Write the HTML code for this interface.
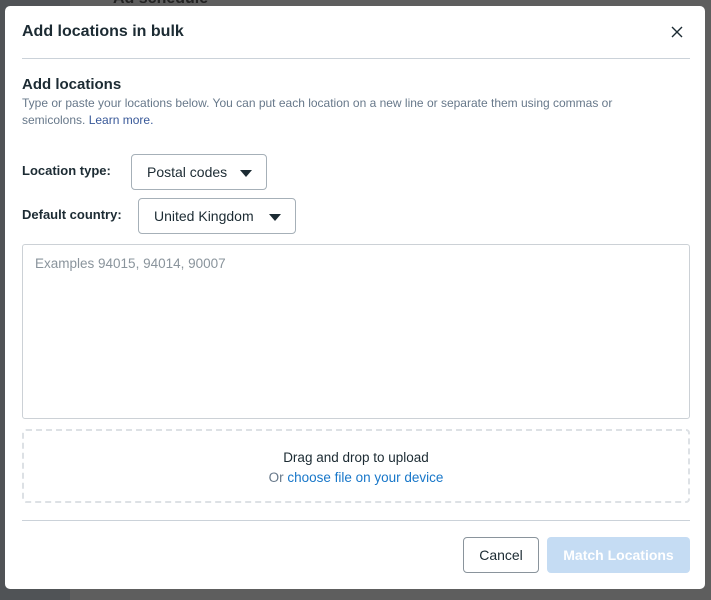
<!DOCTYPE html>
<html><head><style>
*{box-sizing:border-box;margin:0;padding:0}
body{width:711px;height:600px;background:#5e5e5e;font-family:"Liberation Sans",sans-serif;position:relative;overflow:hidden;color:#1c2b33}
.lstrip{position:absolute;left:0;top:0;width:70px;height:600px;background:#505356}
.bg-t{position:absolute;left:113px;top:-10px;font-size:16px;font-weight:bold;color:#222}
.modal{position:absolute;left:5px;top:6px;width:700px;height:583px;background:#fff;border-radius:5px}
.abs{position:absolute}
h1{position:absolute;left:17px;top:17px;font-size:16px;font-weight:bold;color:#1c2b33}
.hr{position:absolute;left:17px;width:668px;height:1px;background:#cbd2d9}
.sel{position:absolute;height:36px;border:1px solid #a6b0b8;border-radius:4px;font-size:14px;color:#1c2b33;padding:9px 0 0 15px}
.tri{position:absolute;right:14px;top:15px;width:0;height:0;border-left:6px solid transparent;border-right:6px solid transparent;border-top:7px solid #1c2b33}
.lab{position:absolute;font-size:13px;font-weight:bold}
</style></head><body>
<div class="lstrip"></div>
<div class="bg-t">Ad schedule</div>
<div class="modal">
<h1>Add locations in bulk</h1>
<svg class="abs" style="left:666px;top:20px" width="12" height="12" viewBox="0 0 12 12"><path d="M1 1L11 11M11 1L1 11" stroke="#1c2b33" stroke-width="1.4"/></svg>
<div class="hr" style="top:52px"></div>
<div class="abs" style="left:17px;top:70px;font-size:15px;font-weight:bold">Add locations</div>
<div class="abs" style="left:17px;top:89px;width:600px;font-size:12px;line-height:17px;color:#67788a">Type or paste your locations below. You can put each location on a new line or separate them using commas or semicolons. <span style="color:#385898">Learn more.</span></div>
<div class="lab" style="left:17px;top:157px">Location type:</div>
<div class="sel" style="left:126px;top:148px;width:136px">Postal codes<div class="tri"></div></div>
<div class="lab" style="left:17px;top:201px">Default country:</div>
<div class="sel" style="left:133px;top:192px;width:158px">United Kingdom<div class="tri"></div></div>
<div class="abs" style="left:17px;top:238px;width:668px;height:175px;border:1px solid #ccd1d6;border-radius:3px;padding:11px 12px;font-size:13.5px;color:#8a949c">Examples 94015, 94014, 90007</div>
<div class="abs" style="left:17px;top:423px;width:668px;height:74px;border:2px dashed #dde1e5;border-radius:4px;text-align:center;font-size:13.5px;color:#1c2b33;padding-top:17px;line-height:20px">Drag and drop to upload<br><span style="color:#67788a">Or </span><span style="color:#1877c9">choose file on your device</span></div>
<div class="hr" style="top:514px"></div>
<div class="abs" style="left:458px;top:531px;width:76px;height:36px;border:1px solid #8a949c;border-radius:4px;font-size:14px;text-align:center;line-height:34px">Cancel</div>
<div class="abs" style="left:542px;top:531px;width:143px;height:36px;background:#c5dcf3;border-radius:4px;font-size:14px;font-weight:bold;color:#fff;text-align:center;line-height:36px">Match Locations</div>
</div>
</body></html>
